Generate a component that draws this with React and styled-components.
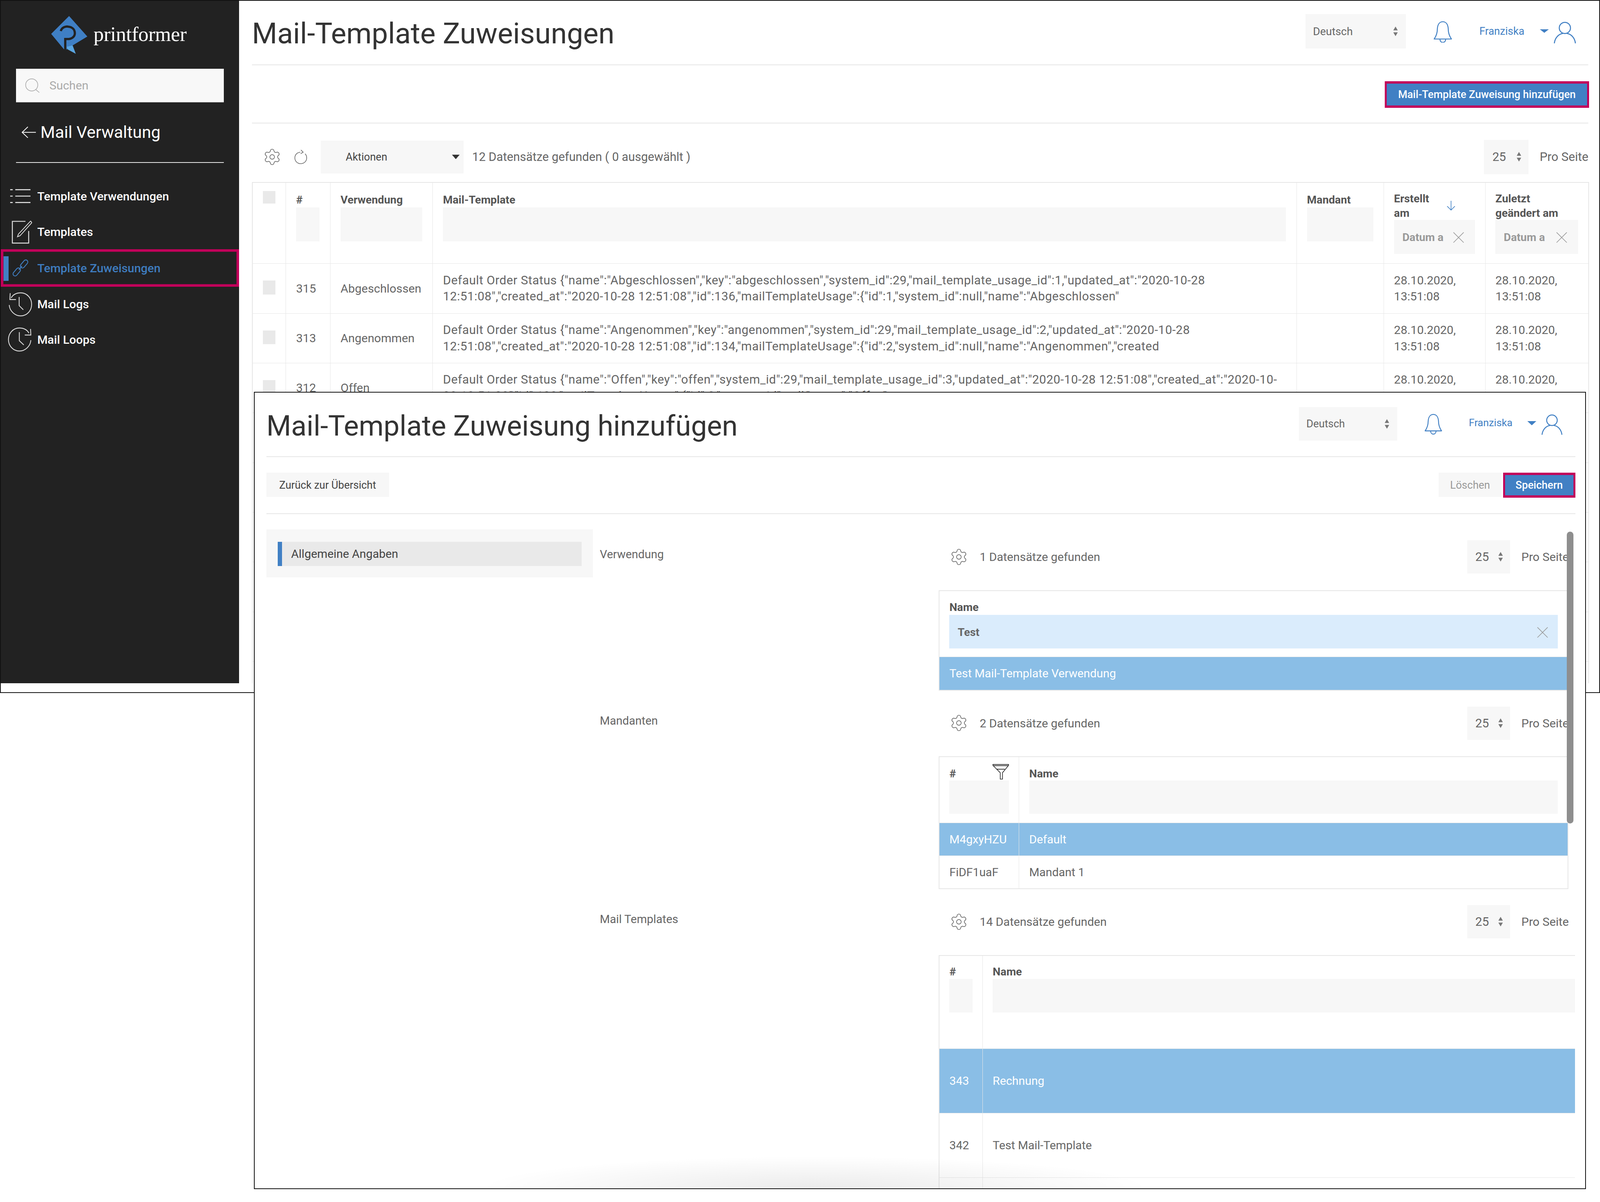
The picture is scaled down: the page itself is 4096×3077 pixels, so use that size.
import React from 'react';
import styled, { createGlobalStyle } from 'styled-components';
import { Settings } from 'lucide-react';

const Global = createGlobalStyle`
  html, body { margin: 0; padding: 0; background: #fff; overflow: hidden; }
  * { box-sizing: border-box; }
  body { font-family: Roboto, "Liberation Sans", sans-serif; }
`;

const BLUE = '#4180c4';
const PINK = '#c2005a';
const LINE = '#e6e6e6';
const SOFT = '#f7f7f7';

// the reference is 5000 wide, everything below is written in its pixels
const Desktop = styled.div`
  position: relative;
  width: 5000px;
  height: 3756px;
  zoom: 0.8192;
  overflow: hidden;
  background: #fff;
`;

const BackWindow = styled.div`
  position: absolute;
  left: 0;
  top: 0;
  width: 5000px;
  height: 2165px;
  border: 3px solid #111;
  background: #fff;
  display: flex;
  align-items: flex-start;
`;

const FrontWindow = styled.div`
  position: absolute;
  left: 794px;
  top: 1224px;
  width: 4162px;
  height: 2492px;
  border: 3px solid #111;
  background: #fff;
  padding: 0 31px 0 36px;
  overflow: hidden;
`;

const Sidebar = styled.aside`
  width: 745px;
  height: 2133px;
  flex: none;
  background: #222;
  display: flex;
  flex-direction: column;
`;

const LogoRow = styled.div`
  height: 212px;
  padding: 48px 0 0 157px;
  display: flex;
  align-items: flex-start;
  gap: 19px;
`;

const LogoText = styled.span`
  font-family: "Liberation Serif", serif;
  font-size: 64px;
  line-height: 70px;
  margin-top: 22px;
  color: #fff;
  letter-spacing: -0.4px;
`;

const SearchBox = styled.div`
  margin: 0 48px;
  height: 105px;
  background: #f8f8f8;
  border-bottom: 3px solid #e4e4e4;
  display: flex;
  align-items: center;
  padding: 3px 0 0 28px;
  gap: 30px;
  font-size: 37px;
  color: #aaa;
`;

const BackRow = styled.div`
  height: 187px;
  display: flex;
  align-items: center;
  padding-left: 65px;
  gap: 14px;
  font-size: 52.3px;
  color: #fff;
`;

const SideRule = styled.div`
  margin: 0 48px;
  height: 3px;
  background: #e8e8e8;
`;

const SideNav = styled.nav`
  margin-top: 48px;
  display: flex;
  flex-direction: column;
`;

const NavItem = styled.a`
  position: relative;
  display: flex;
  align-items: center;
  height: ${p => (p.$active ? 117 : p.$h || 111)}px;
  font-size: 37px;
  font-weight: 500;
  color: ${p => (p.$active ? '#3e7cbf' : '#fff')};
  box-shadow: ${p => (p.$active ? `inset 0 0 0 8px ${PINK}` : 'none')};
`;

const NavBar = styled.span`
  position: absolute;
  left: 8px;
  width: 17px;
  top: 22px;
  bottom: 19px;
  background: ${BLUE};
`;

const NavIcon = styled.span`
  width: 114px;
  flex: none;
  display: flex;
  padding-left: ${p => p.$x}px;
  margin-top: ${p => p.$y || 0}px;
  svg { display: block; flex: none; }
`;

const Content = styled.main`
  flex: 1;
  min-width: 0;
  height: 2133px;
  overflow: hidden;
  padding: 0 34px 0 40px;
`;

const HeaderRow = styled.header`
  height: ${p => p.$h}px;
  flex: none;
  display: flex;
  align-items: flex-start;
  border-bottom: 3px solid ${LINE};
`;

const Title = styled.h1`
  margin: ${p => p.$top}px auto 0 0;
  font-size: ${p => p.$size}px;
  font-weight: 400;
  line-height: 110px;
  color: #333;
  white-space: nowrap;
`;

const LangSelect = styled.div`
  width: ${p => p.$w}px;
  height: ${p => p.$hh}px;
  margin-top: ${p => p.$top}px;
  background: ${SOFT};
  display: flex;
  align-items: center;
  justify-content: space-between;
  padding: 0 24px;
  font-size: ${p => p.$fs}px;
  color: #666;
`;

const HeaderIcon = styled.span`
  display: block;
  flex: none;
  margin: ${p => p.$top}px 0 0 ${p => p.$left}px;
  svg { display: block; }
`;

const UserName = styled.span`
  flex: none;
  margin: ${p => p.$top}px 0 0 ${p => p.$left}px;
  font-size: ${p => p.$fs}px;
  line-height: 40px;
  color: ${BLUE};
`;

const ActionRow = styled.div`
  height: ${p => p.$h}px;
  display: flex;
  align-items: flex-start;
  justify-content: flex-end;
  padding-top: 49px;
  gap: 5px;
  border-bottom: 3px solid ${LINE};
`;

const PrimaryButton = styled.button`
  height: ${p => p.$h}px;
  width: ${p => p.$w}px;
  margin-right: ${p => p.$mr || 0}px;
  border: 8px solid ${PINK};
  border-left-width: 7px;
  border-right-width: 7px;
  background: ${BLUE};
  color: #fff;
  padding: 0;
  font-family: inherit;
  font-size: 33px;
  font-weight: 500;
  white-space: nowrap;
`;

const SoftButton = styled.button`
  height: 75px;
  width: ${p => p.$w}px;
  margin-right: ${p => (p.$left ? 'auto' : '0')};
  padding: 3px 0 0;
  border: 0;
  background: ${SOFT};
  color: ${p => p.$color};
  font-family: inherit;
  font-size: 33px;
  white-space: nowrap;
`;

const Toolbar = styled.div`
  height: 184px;
  padding: 26px 0 0 39px;
  display: flex;
  align-items: center;
  font-size: 37.5px;
  color: #666;
`;

const ActionSelect = styled.div`
  width: 447px;
  height: 102px;
  margin: 0 26px 0 42px;
  background: ${SOFT};
  display: flex;
  align-items: center;
  justify-content: space-between;
  padding: 0 13px 0 78px;
  font-size: 33px;
  color: #444;
`;

const PageSelect = styled.div`
  width: ${p => p.$w}px;
  height: ${p => p.$h}px;
  margin-left: auto;
  background: ${SOFT};
  display: flex;
  align-items: center;
  justify-content: space-between;
  padding: 0 22px 0 26px;
  font-size: 38px;
  color: #666;
`;

const PerPage = styled.span`
  margin-left: ${p => p.$left}px;
  font-size: ${p => p.$fs}px;
  color: #666;
  white-space: nowrap;
`;

const GridTable = styled.table`
  --pad: ${p => p.$pad}px;
  width: ${p => p.$w}px;
  table-layout: fixed;
  border-collapse: collapse;
  border: 3px solid ${LINE};
  font-size: ${p => p.$fs}px;
  color: #666;
`;

const HeadRow = styled.tr`
  height: ${p => p.$h}px;
`;

const BodyRow = styled.tr`
  height: ${p => p.$h}px;
  background: ${p => (p.$on ? '#8abee6' : 'transparent')};
  color: ${p => (p.$on ? '#fff' : 'inherit')};
`;

const HeadCell = styled.th`
  vertical-align: top;
  text-align: left;
  font-weight: 400;
  padding: ${p => p.$top || 30}px var(--pad) 0 ${p => p.$pl || 'var(--pad)'};
  border: 2px solid ${LINE};
  border-top: 0;
`;

const Cell = styled.td`
  padding: 0 var(--pad) 0 ${p => p.$pl || 'var(--pad)'};
  border: 2px solid ${LINE};
  line-height: 51px;
  white-space: nowrap;
  overflow: hidden;
`;

const JsonCell = styled(Cell)`
  font-size: 38px;
  letter-spacing: 0.7px;
`;

const HeadLabel = styled.div`
  display: flex;
  justify-content: space-between;
  align-items: flex-start;
  height: ${p => p.$h || 46}px;
  line-height: ${p => p.$lh || 46}px;
  margin-bottom: ${p => p.$mb ?? 0}px;
  font-size: 34.5px;
  font-weight: 700;
  color: #555;
`;

const FilterBox = styled.div`
  height: ${p => p.$h || 107}px;
  background: ${p => p.$bg || SOFT};
  display: flex;
  align-items: center;
  justify-content: space-between;
  padding: 3px ${p => p.$pr || 34}px 0 26px;
  font-size: 34.5px;
  font-weight: 700;
  color: ${p => p.$color || '#999'};
  white-space: nowrap;
`;

const CheckMark = styled.div`
  width: 39px;
  height: ${p => p.$h}px;
  margin-bottom: ${p => p.$mb || 0}px;
  background: #e9e9e9;
`;

const EditorBody = styled.div`
  display: flex;
  align-items: flex-start;
`;

const NavPanel = styled.div`
  width: 1021px;
  height: 150px;
  margin-top: 48px;
  padding: 39px 36px 36px 36px;
  flex: none;
  background: ${SOFT};
`;

const NavEntry = styled.div`
  height: 75px;
  background: #e9e9e9;
  border-left: 14px solid ${BLUE};
  padding-left: 28px;
  display: flex;
  align-items: center;
  font-size: 36.5px;
  color: #444;
`;

const Fields = styled.div`
  margin-left: 21px;
  flex: 1;
  min-width: 0;
`;

const FieldRow = styled.section`
  display: flex;
  padding-top: ${p => p.$top}px;
`;

const FieldLabel = styled.div`
  width: 1059px;
  flex: none;
  margin-top: 22px;
  font-size: 36px;
  line-height: 44px;
  color: #666;
`;

const FieldBody = styled.div`
  width: 1988px;
  flex: none;
`;

const SubToolbar = styled.div`
  height: 104px;
  margin-bottom: 52px;
  padding: 0 19px 0 39px;
  display: flex;
  align-items: center;
  gap: 41px;
  font-size: 36.7px;
  color: #666;
`;

const ScrollThumb = styled.div`
  position: absolute;
  left: 4100px;
  top: 435px;
  width: 20px;
  height: 912px;
  border-radius: 10px;
  background: #8e8e8e;
`;

const BottomShade = styled.div`
  position: absolute;
  left: 700px;
  bottom: 0;
  width: 2100px;
  height: 100px;
  background: radial-gradient(ellipse 50% 100% at 50% 100%, rgba(0,0,0,0.08), rgba(0,0,0,0));
  pointer-events: none;
`;

const Arrows = ({ c = '#777' }) => (
  <svg width="16" height="30" viewBox="0 0 16 30">
    <path d="M8 0 L15 12 H1 Z M1 18 H15 L8 30 Z" fill={c} />
  </svg>
);

const Caret = ({ w = 26, h = 14, c = '#333' }) => (
  <svg width={w} height={h} viewBox="0 0 26 14" preserveAspectRatio="none">
    <path d="M0 0 H26 L13 14 Z" fill={c} />
  </svg>
);

const Cross = ({ s = 34, c = '#999' }) => (
  <svg width={s} height={s} viewBox="0 0 34 34" fill="none" stroke={c} strokeWidth="2">
    <path d="M1 1 L33 33 M33 1 L1 33" />
  </svg>
);

const Bell = ({ w, h }) => (
  <svg width={w} height={h} viewBox="0 0 60 68" fill="none" stroke={BLUE} strokeWidth="3">
    <path d="M3 56 C10 46 13 36 13 24 C14 9 21 2 30 2 C39 2 46 9 47 24 C47 36 50 46 57 56 Z" strokeLinejoin="round" />
    <path d="M21 57 C22 70 38 70 39 57" />
  </svg>
);

const User = ({ w, h }) => (
  <svg width={w} height={h} viewBox="0 0 70 67" fill="none" stroke={BLUE} strokeWidth="3.2">
    <circle cx="35" cy="19" r="17.5" />
    <path d="M2 67 C4 50 15 38 29 36 M68 67 C66 50 55 38 41 36" />
  </svg>
);

const Gear = () => <Settings size={58} strokeWidth={0.85} color="#666" style={{ flex: 'none', margin: '0 -5px' }} />;

const Refresh = () => (
  <svg width="40" height="45" viewBox="0 0 40 45" fill="none" stroke="#666" strokeWidth="2" style={{ flex: 'none', marginLeft: 46 }}>
    <path d="M18 8 C8 9 1 16 1 26 C1 36 9 44 19 44 C30 44 38 36 38 26 C38 21 36 16 33 13" />
    <path d="M20 1 L27 8 L19 13" />
  </svg>
);

const Logo = () => (
  <svg width="114" height="118" viewBox="0 0 114 118">
    <path d="M56 0 L113 64 L67 92 L46 106 L40 104 L0 56 Z" fill="#3f7fc4" />
    <path d="M49 96 L67 92 L77 118 L51 104 Z" fill="#5aa5e0" />
    <path d="M30 47 C33 36 44 32 52 33 C66 34 74 42 74 54 C74 66 62 72 52 72 L44 72 L44 106" fill="none" stroke="#222" strokeWidth="7" />
  </svg>
);

const SearchIcon = () => (
  <svg width="46" height="44" viewBox="0 0 46 44" fill="none" stroke="#aaa" strokeWidth="2">
    <circle cx="21" cy="20" r="19" />
    <path d="M33 34 L45 44" />
  </svg>
);

const BackArrow = () => (
  <svg width="45" height="36" viewBox="0 0 45 36" fill="none" stroke="#fff" strokeWidth="2.4">
    <path d="M45 18 H2 M20 1 L2 18 L20 35" />
  </svg>
);

const ListIcon = () => (
  <svg width="64" height="44" viewBox="0 0 64 44" fill="none" stroke="#ddd" strokeWidth="3.2">
    <path d="M0 2 H8 M0 22 H8 M0 42 H8 M16 2 H64 M16 22 H64 M16 42 H64" />
  </svg>
);

const DocIcon = () => (
  <svg width="64" height="72" viewBox="0 0 64 72" fill="none" stroke="#ddd" strokeWidth="3">
    <path d="M43 2 H2 V70 H53 V32" />
    <path d="M59 1 L63 6 L26 47 L18 50 L21 42 Z" strokeWidth="2.4" />
  </svg>
);

const ChainIcon = () => (
  <svg width="52" height="56" viewBox="0 0 52 56" fill="none" stroke={BLUE} strokeWidth="2.6">
    <rect x="31" y="1" width="13" height="29" rx="6.5" transform="rotate(40 37.5 15.5)" />
    <rect x="8" y="26" width="13" height="29" rx="6.5" transform="rotate(40 14.5 40.5)" />
    <path d="M21 34 L31 22" />
  </svg>
);

const HistoryIcon = () => (
  <svg width="74" height="76" viewBox="0 0 74 76" fill="none" stroke="#ddd" strokeWidth="2.6">
    <path d="M8 18 C14 7 25 2 38 2 C57 2 72 18 72 38 C72 58 57 74 38 74 C19 74 3 58 2 40" />
    <path d="M5 3 L4 23 H23" />
    <path d="M33 15 V42 L46 55" />
  </svg>
);

const LoopIcon = () => (
  <svg width="74" height="76" viewBox="0 0 74 76" fill="none" stroke="#ddd" strokeWidth="2.6">
    <path d="M66 18 C60 7 49 2 36 2 C17 2 2 18 2 38 C2 58 17 74 36 74 C55 74 71 58 72 40" />
    <path d="M71 5 L72 24 H53" />
    <path d="M36 15 V42 L50 55" />
  </svg>
);

const FilterIcon = () => (
  <svg width="51" height="48" viewBox="0 0 51 48" fill="none" stroke="#222" strokeWidth="2">
    <path d="M1 1 H50 V4 L31 27 V47 L24 47 V27 L1 4 Z M1 5 H50 M12 16 H38" />
  </svg>
);

const SortDown = () => (
  <svg width="26" height="30" viewBox="0 0 26 30" fill="none" stroke={BLUE} strokeWidth="2" style={{ margin: '28px 62px 0 0' }}>
    <path d="M13 0 V29 M1 17 L13 29 L25 17" />
  </svg>
);

const rows = [
  ['315', 'Abgeschlossen', 'Default Order Status {"name":"Abgeschlossen","key":"abgeschlossen","system_id":29,"mail_template_usage_id":1,"updated_at":"2020-10-28', '12:51:08","created_at":"2020-10-28 12:51:08","id":136,"mailTemplateUsage":{"id":1,"system_id":null,"name":"Abgeschlossen"'],
  ['313', 'Angenommen', 'Default Order Status {"name":"Angenommen","key":"angenommen","system_id":29,"mail_template_usage_id":2,"updated_at":"2020-10-28', '12:51:08","created_at":"2020-10-28 12:51:08","id":134,"mailTemplateUsage":{"id":2,"system_id":null,"name":"Angenommen","created'],
  ['312', 'Offen', 'Default Order Status {"name":"Offen","key":"offen","system_id":29,"mail_template_usage_id":3,"updated_at":"2020-10-28 12:51:08","created_at":"2020-10-', '28 12:51:08","id":133,"mailTemplateUsage":{"id":3,"system_id":null,"name":"Offen"'],
];

const TopTools = ({ bell, user, name, caret, nameFs, selFs, sw, sh, selTop, end }) => (
  <>
    <LangSelect $w={sw} $hh={sh} $top={selTop} $fs={selFs}>Deutsch <Arrows /></LangSelect>
    <HeaderIcon $left={bell.l} $top={bell.t}><Bell w={bell.w} h={bell.h} /></HeaderIcon>
    <UserName $left={name.l} $top={name.t} $fs={nameFs}>Franziska</UserName>
    <HeaderIcon $left={caret.l} $top={caret.t}><Caret w={caret.w} h={caret.h} c={BLUE} /></HeaderIcon>
    <HeaderIcon $left={user.l} $top={user.t} style={{ marginRight: end }}><User w={user.w} h={user.h} /></HeaderIcon>
  </>
);

function MailTable() {
  return (
    <GridTable $w={4176} $fs={37} $pad={32}>
      <colgroup>
        <col style={{ width: 104 }} /><col style={{ width: 139 }} /><col style={{ width: 320 }} /><col style={{ width: 2700 }} />
        <col style={{ width: 273 }} /><col style={{ width: 317 }} /><col style={{ width: 323 }} />
      </colgroup>
      <thead>
        <HeadRow $h={253}>
          <HeadCell $top={25}><CheckMark $h={39} /></HeadCell>
          <HeadCell><HeadLabel>#</HeadLabel><FilterBox /></HeadCell>
          <HeadCell><HeadLabel>Verwendung</HeadLabel><FilterBox /></HeadCell>
          <HeadCell><HeadLabel>Mail-Template</HeadLabel><FilterBox /></HeadCell>
          <HeadCell><HeadLabel>Mandant</HeadLabel><FilterBox /></HeadCell>
          <HeadCell $top={28} $pl="31px">
            <HeadLabel $h={87} $lh={45}><span>Erstellt<br />am</span><SortDown /></HeadLabel>
            <FilterBox>Datum a <Cross /></FilterBox>
          </HeadCell>
          <HeadCell $top={28} $pl="31px">
            <HeadLabel $h={87} $lh={45}><span>Zuletzt<br />geändert am</span></HeadLabel>
            <FilterBox>Datum a <Cross /></FilterBox>
          </HeadCell>
        </HeadRow>
      </thead>
      <tbody>
        {rows.map(r => (
          <BodyRow $h={155.5} key={r[0]}>
            <Cell><CheckMark $h={43} $mb={6} /></Cell>
            <Cell>{r[0]}</Cell>
            <Cell>{r[1]}</Cell>
            <JsonCell>{r[2]}<br />{r[3]}</JsonCell>
            <Cell />
            <Cell $pl="31px">28.10.2020,<br />13:51:08</Cell>
            <Cell $pl="31px">28.10.2020,<br />13:51:08</Cell>
          </BodyRow>
        ))}
        {[1, 2, 3, 4, 5, 6].map(i => (
          <BodyRow $h={155.5} key={i}>
            <Cell /><Cell /><Cell /><Cell /><Cell /><Cell /><Cell />
          </BodyRow>
        ))}
      </tbody>
    </GridTable>
  );
}

function SubBar({ text }) {
  return (
    <SubToolbar>
      <Gear />
      <span>{text}</span>
      <PageSelect $w={135} $h={104}>25 <Arrows /></PageSelect>
      <PerPage $left={-6} $fs={37}>Pro Seite</PerPage>
    </SubToolbar>
  );
}

export default function App() {
  return (
    <Desktop>
      <Global />
      <BackWindow>
        <Sidebar>
          <LogoRow><Logo /><LogoText>printformer</LogoText></LogoRow>
          <SearchBox><SearchIcon /> Suchen</SearchBox>
          <BackRow><BackArrow /> Mail Verwaltung</BackRow>
          <SideRule />
          <SideNav>
            <NavItem><NavIcon $x={29}><ListIcon /></NavIcon>Template Verwendungen</NavItem>
            <NavItem><NavIcon $x={34} $y={4}><DocIcon /></NavIcon>Templates</NavItem>
            <NavItem $active>
              <NavBar />
              <NavIcon $x={36}><ChainIcon /></NavIcon>Template Zuweisungen
            </NavItem>
            <NavItem $h={109}><NavIcon $x={25}><HistoryIcon /></NavIcon>Mail Logs</NavItem>
            <NavItem><NavIcon $x={22}><LoopIcon /></NavIcon>Mail Loops</NavItem>
          </SideNav>
        </Sidebar>
        <Content>
          <HeaderRow $h={202}>
            <Title $top={48} $size={90.5}>Mail-Template Zuweisungen</Title>
            <TopTools
              sw={314} sh={107} selTop={42} selFs={34} nameFs={33} end={38}
              bell={{ l: 86, t: 63, w: 60, h: 68 }}
              name={{ l: 84, t: 76 }}
              caret={{ l: 48, t: 89, w: 28, h: 11 }}
              user={{ l: 15, t: 66, w: 71, h: 67 }}
            />
          </HeaderRow>
          <ActionRow $h={181}>
            <PrimaryButton $w={638} $h={83} $mr={-2}>Mail-Template Zuweisung hinzufügen</PrimaryButton>
          </ActionRow>
          <Toolbar>
            <Gear />
            <Refresh />
            <ActionSelect>Aktionen <Caret w={24} h={14} /></ActionSelect>
            <span>12 Datensätze gefunden ( 0 ausgewählt )</span>
            <PageSelect $w={139} $h={108}>25 <Arrows /></PageSelect>
            <PerPage $left={35} $fs={38}>Pro Seite</PerPage>
          </Toolbar>
          <MailTable />
        </Content>
      </BackWindow>

      <FrontWindow>
        <HeaderRow $h={202}>
          <Title $top={50} $size={88.6}>Mail-Template Zuweisung hinzufügen</Title>
          <TopTools
            sw={308} sh={105} selTop={46} selFs={33} nameFs={32} end={40}
            bell={{ l: 84, t: 65, w: 57, h: 68 }}
            name={{ l: 83, t: 75 }}
            caret={{ l: 46, t: 90, w: 28, h: 13 }}
            user={{ l: 16, t: 68, w: 66, h: 66 }}
          />
        </HeaderRow>
        <ActionRow $h={178}>
          <SoftButton $left $w={383} $color="#444">Zurück zur Übersicht</SoftButton>
          <SoftButton $w={197} $color="#999">Löschen</SoftButton>
          <PrimaryButton $w={225} $h={78}>Speichern</PrimaryButton>
        </ActionRow>
        <EditorBody>
          <NavPanel><NavEntry>Allgemeine Angaben</NavEntry></NavPanel>
          <Fields>
            <FieldRow $top={82}>
              <FieldLabel>Verwendung</FieldLabel>
              <FieldBody>
                <SubBar text="1 Datensätze gefunden" />
                <GridTable $w={1968} $fs={36.4} $pad={31}>
                  <thead>
                    <HeadRow $h={207}>
                      <HeadCell $top={26}>
                        <HeadLabel $mb={3} $lh={52}>Name</HeadLabel>
                        <FilterBox $bg="#daecfc" $color="#666" $pr={30} $h={105}>Test <Cross /></FilterBox>
                      </HeadCell>
                    </HeadRow>
                  </thead>
                  <tbody>
                    <BodyRow $h={104} $on><Cell>Test Mail-Template Verwendung</Cell></BodyRow>
                  </tbody>
                </GridTable>
              </FieldBody>
            </FieldRow>
            <FieldRow $top={50}>
              <FieldLabel>Mandanten</FieldLabel>
              <FieldBody>
                <SubBar text="2 Datensätze gefunden" />
                <GridTable $w={1968} $fs={36.4} $pad={31}>
                  <colgroup><col style={{ width: 250 }} /><col /></colgroup>
                  <thead>
                    <HeadRow $h={207}>
                      <HeadCell $top={22}>
                        <HeadLabel $mb={3} $h={48} $lh={60}>#<FilterIcon /></HeadLabel>
                        <FilterBox $h={104} />
                      </HeadCell>
                      <HeadCell $top={22}>
                        <HeadLabel $mb={3} $h={48} $lh={60}>Name</HeadLabel>
                        <FilterBox $h={104} />
                      </HeadCell>
                    </HeadRow>
                  </thead>
                  <tbody>
                    <BodyRow $h={102} $on><Cell>M4gxyHZU</Cell><Cell>Default</Cell></BodyRow>
                    <BodyRow $h={103}><Cell>FiDF1uaF</Cell><Cell>Mandant 1</Cell></BodyRow>
                  </tbody>
                </GridTable>
              </FieldBody>
            </FieldRow>
            <FieldRow $top={50}>
              <FieldLabel>Mail Templates</FieldLabel>
              <FieldBody>
                <SubBar text="14 Datensätze gefunden" />
                <GridTable $w={1988} $fs={36.4} $pad={31} style={{ borderRight: 0 }}>
                  <colgroup><col style={{ width: 136 }} /><col /></colgroup>
                  <thead>
                    <HeadRow $h={292}>
                      <HeadCell $top={22}>
                        <HeadLabel $mb={3} $h={48} $lh={56}>#</HeadLabel>
                        <FilterBox $h={104} />
                      </HeadCell>
                      <HeadCell $top={22} style={{ paddingRight: 0, borderRight: 0 }}>
                        <HeadLabel $mb={3} $h={48} $lh={56}>Name</HeadLabel>
                        <FilterBox $h={104} />
                      </HeadCell>
                    </HeadRow>
                  </thead>
                  <tbody>
                    <BodyRow $h={201} $on><Cell>343</Cell><Cell style={{ borderRight: 0 }}>Rechnung</Cell></BodyRow>
                    <BodyRow $h={201}><Cell>342</Cell><Cell style={{ borderRight: 0 }}>Test Mail-Template</Cell></BodyRow>
                    <BodyRow $h={201}><Cell /><Cell style={{ borderRight: 0 }} /></BodyRow>
                  </tbody>
                </GridTable>
              </FieldBody>
            </FieldRow>
          </Fields>
        </EditorBody>
        <ScrollThumb />
        <BottomShade />
      </FrontWindow>
    </Desktop>
  );
}
